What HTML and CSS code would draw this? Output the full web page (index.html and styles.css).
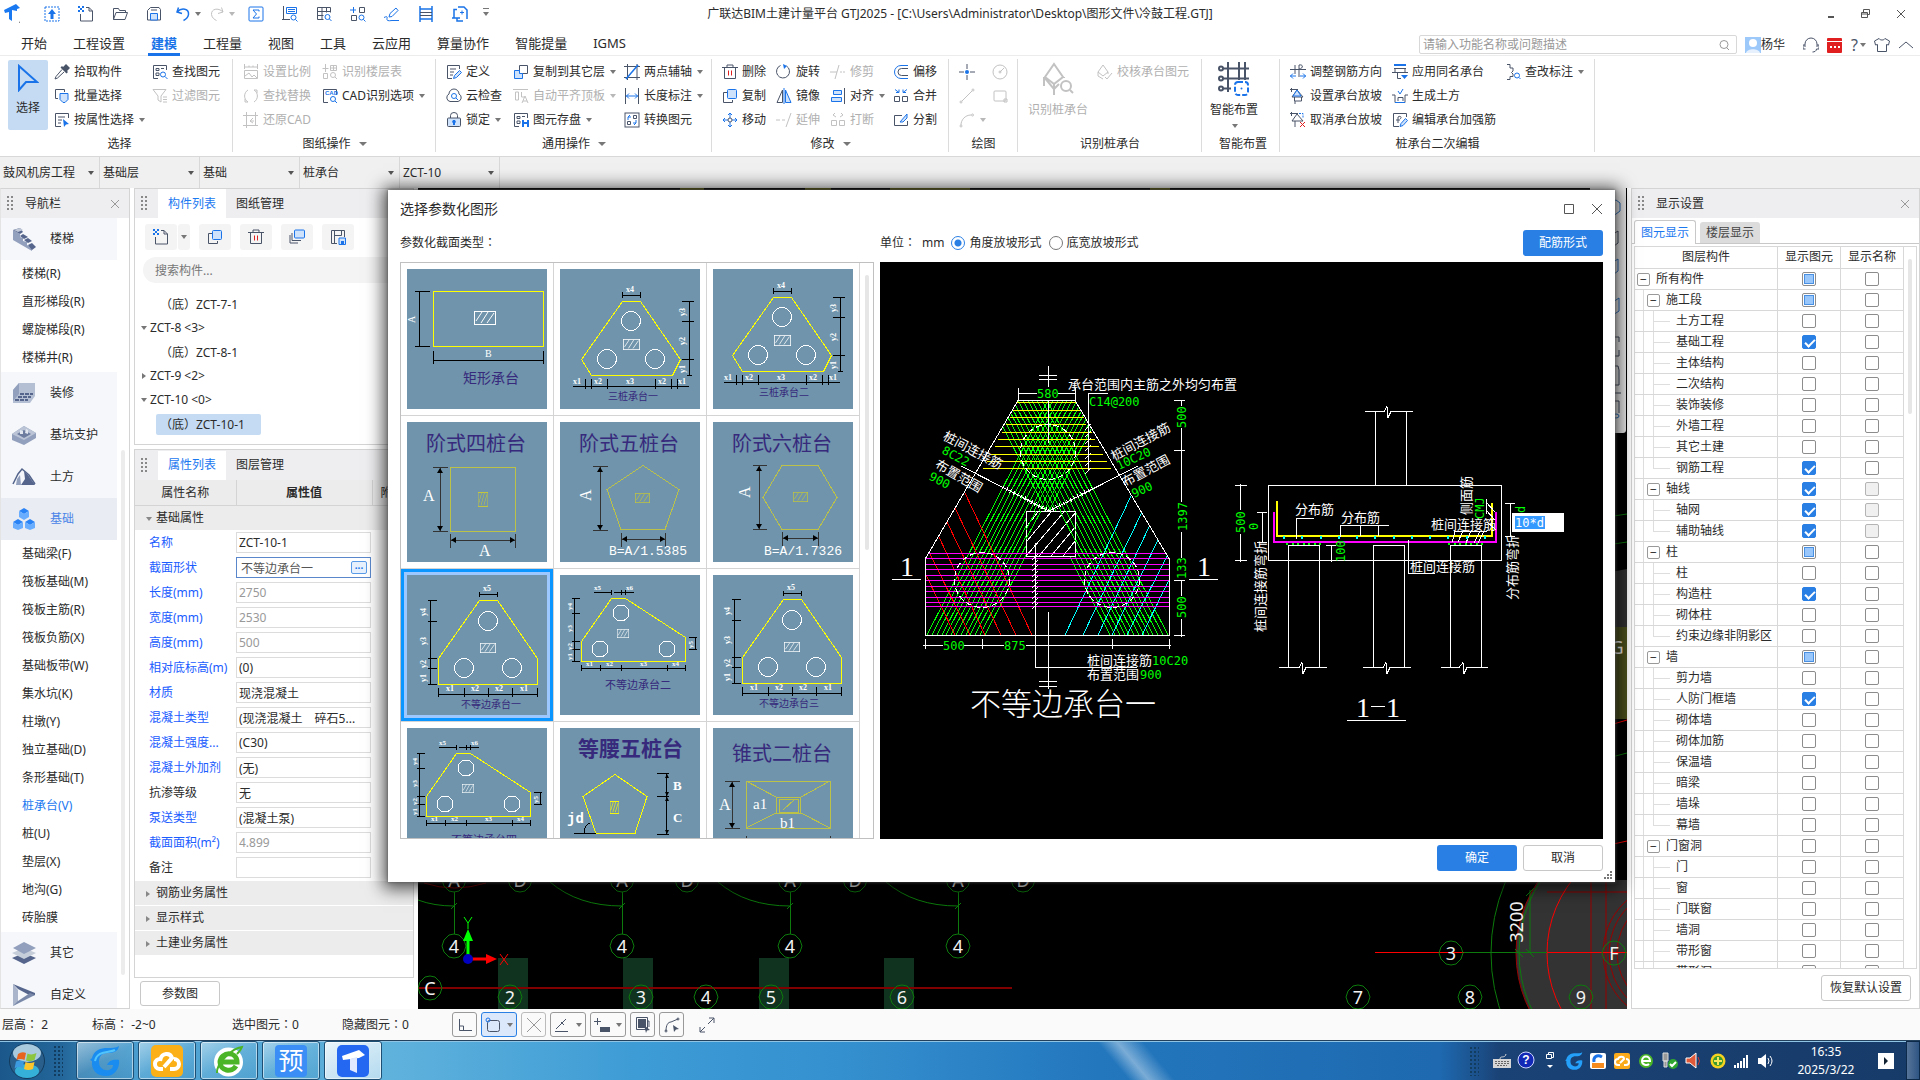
FILE: index.html
```html
<!DOCTYPE html>
<html lang="zh-CN">
<head>
<meta charset="utf-8">
<title>广联达BIM土建计量平台 GTJ2025</title>
<link rel="stylesheet" href="styles.css">
</head>
<body>
<svg class="defs" aria-hidden="true">
  <symbol id="dots" viewBox="0 0 6 15"><path fill="#888" d="M0 0h2v2H0zM4 0h2v2H4zM0 4h2v2H0zM4 4h2v2H4zM0 8h2v2H0zM4 8h2v2H4zM0 12h2v2H0zM4 12h2v2H4z"/></symbol>
  <symbol id="close" viewBox="0 0 10 10"><path class="s" d="M1 1l8 8M9 1L1 9"/></symbol>
  <symbol id="logo" viewBox="0 0 16 20"><path fill="#1a78f0" d="M0 6L12 0l4 4-3 1v2L8 6v11l-3-2V8L1 9z"/><path fill="#666" d="M15 19l1-2v2z"/></symbol>
  <symbol id="cloudup" viewBox="0 0 16 16"><rect class="b" x="1" y="1" width="14" height="14" stroke-dasharray="2 1"/><path class="f" d="M8 3l4 5H9.500v5h-3V8H4z"/></symbol>
  <symbol id="new" viewBox="0 0 16 16"><path class="k" d="M8 1.500h3l3.500 3.500v10h-12V8M11 1.500V5h3.500"/><path class="f" d="M0 0h2v2H0zM4 0h2v2H4zM2 2h2v2H2zM0 4h2v2H0zM4 4h2v2H4z"/></symbol>
  <symbol id="open" viewBox="0 0 16 16"><path class="k" d="M1.500 13.500v-11h5l1 2h6v2M1.500 13.500L4 6.500h11.500l-2.500 7z"/></symbol>
  <symbol id="save" viewBox="0 0 16 16"><path class="k" d="M1.500 4.500l3-3h8.500l1.500 2v10.500h-13z"/><path class="k" d="M5 4h6"/><path class="b l" d="M4.500 7.500h7v6.500h-7z"/></symbol>
  <symbol id="undo" viewBox="0 0 16 16"><path class="b" stroke-width="1.500" d="M3.500 1.500L2 6l5 1.500M2 6c5-5 12-3 11.500 2.500-.5 3.500-3 5-5 6"/></symbol>
  <symbol id="redo" viewBox="0 0 16 16"><path class="k" d="M12.500 1.500L14 6 9 7.500M14 6C9 1 2 3 2.500 8.500c.5 3.500 3 5 5 6"/></symbol>
  <symbol id="sigma" viewBox="0 0 16 16"><rect class="b" x="1" y="1" width="14" height="14" rx="1"/><path class="b" d="M11 5.500V4H5l3.500 4L5 12h6v-1.500"/></symbol>
  <symbol id="lookup" viewBox="0 0 16 16"><path class="k" d="M1.500 0v13.500M0 13.500h8"/><path class="b" d="M4.500 1.500h10v6h-10zM6 3.500h7M6 5.500h7"/><circle class="b" cx="11.500" cy="11.500" r="2.500"/><path class="b" d="M13.500 13.500l2 2"/></symbol>
  <symbol id="tablesearch" viewBox="0 0 16 16"><path class="k" d="M1.500 1.500h13v5M1.500 1.500v12h6M6 1.500v12M10.500 1.500v5M1.500 5.500h13M1.500 9.500h6"/><circle class="b" cx="11.500" cy="11" r="2.500"/><path class="b" d="M13.500 13l2 2"/></symbol>
  <symbol id="partsearch" viewBox="0 0 16 16"><path class="b" d="M0 4h6M3.500 1v6"/><path class="k" d="M9.500 1.500h5v5h-5zM1.500 9.500h5v5h-5z"/><circle class="b" cx="11.500" cy="11.500" r="2.500"/><path class="b" d="M13.500 13.500l2 2"/></symbol>
  <symbol id="floortable" viewBox="0 0 16 16"><path class="k" d="M3.500 0v8M.5 4.500h6M1.500 9.500h4v5h-4zM8.500 1.500h6v5h-6zM11.500 1.500v5M8.500 4h6"/><circle class="k" cx="11" cy="11" r="2.500"/><path class="k" d="M13 13l2 2"/></symbol>
  <symbol id="pen" viewBox="0 0 16 16"><path class="b" d="M5 11l1-3.500 6-5.500 2 2.500L8 10.500zM0 11.500q4-2 3 1t5 2h7"/></symbol>
  <symbol id="beam" viewBox="0 0 16 16"><path class="b" stroke-width="1.500" d="M2 0v16M14 0v16M2 3h12M2 13h12"/><path class="k" d="M2 6.500h12M2 9.500h12"/></symbol>
  <symbol id="crop" viewBox="0 0 16 16"><path class="b" stroke-width="1.500" d="M5 3.500H2v8M0 12h8M6 1h6l3 3v9M11 15H5v-3"/><path class="b" d="M8 6.500h4M10 4.500v4"/></symbol>
  <symbol id="picker" viewBox="0 0 16 16"><path class="kf" d="M9 3l3-3 4 4-3 3 1 1-1.500 1.500-6-6L8 2z"/><path class="k" d="M8 5.500l-6 7L1 15l2.500-1 6.500-6"/></symbol>
  <symbol id="multi" viewBox="0 0 16 16"><path class="k" d="M4 10.500H1.500v-9h9V4"/><path class="b l" d="M6 5.500h8v6l-3 3H9l-3-3z"/></symbol>
  <symbol id="attr" viewBox="0 0 16 16"><path class="k" d="M7 14.500H1.500v-13h13V6M4 5h7M4 8h4M4 11h3"/><path class="f" d="M9 7l6 5-3 .5-2 2.500z"/></symbol>
  <symbol id="find" viewBox="0 0 16 16"><path class="k" d="M6 14.500H1.500v-13h13V6M4 4.500h3v2H4zM4 9h3v2.500H4zM9 4.500h3"/><circle class="b" cx="11" cy="10.500" r="2.500"/><path class="b" d="M13 12.500l2.500 2.500"/></symbol>
  <symbol id="filter" viewBox="0 0 16 16"><path class="k" d="M1 1.500h13L9 8v6l-3-2V8zM11 9h4M11 11.500h4M11 14h4"/></symbol>
  <symbol id="ratio" viewBox="0 0 16 16"><path class="k" d="M1 3h14M1.500 0v5M14.500 0v5M6 1.500V3M10 1.500V3M1.500 6.500h13v8h-13zM2 12l4-3 3 4 2-2 3 3"/></symbol>
  <symbol id="swap" viewBox="0 0 16 16"><path class="k" d="M5 2a7 7 0 0 0 0 12M11 14a7 7 0 0 0 0-12M5 14l-3 0M11 2h3v3M2 11v3"/></symbol>
  <symbol id="restorecad" viewBox="0 0 16 16"><path class="k" d="M3.500 0v16M0 3.500h15M12.500 0v14M0 13.500h15M10 6L7 9l3 2M7 9h4"/></symbol>
  <symbol id="define" viewBox="0 0 16 16"><path class="k" d="M6 14.500H1.500v-13h12V5M4 5h6M4 8h4M4 11h3"/><path class="b l" d="M7.500 14.500l1-3 5-5 2 2-5 5z"/></symbol>
  <symbol id="cloudcheck" viewBox="0 0 16 16"><path class="k" d="M4 13.500a4 4 0 0 1-1-7.500 5 5 0 0 1 10 0 4 4 0 0 1-1 7.500z"/><circle class="b" cx="8" cy="8" r="2.500"/><path class="b" d="M10 10l2 2"/></symbol>
  <symbol id="lock" viewBox="0 0 16 16"><path class="k" d="M4.500 6V3.500a3.500 3 0 0 1 7 0V6"/><rect class="k l" x="1.500" y="6" width="13" height="8.500" rx="1"/><path class="f" d="M7 8h2l1 2-1 1v2H7v-2l-1-1z"/></symbol>
  <symbol id="copyfloor" viewBox="0 0 16 16"><path class="k" d="M6.500 9.500v-8h8v8z"/><path class="b l" d="M6.500 6.500h-5v8h8v-5h-3z"/></symbol>
  <symbol id="align" viewBox="0 0 16 16"><path class="k" d="M0 1.500h15M2.500 4v8h3V4zM8.500 4v5h3M9 15l3-7 3 7M10 13h4"/></symbol>
  <symbol id="store" viewBox="0 0 16 16"><path class="k" d="M6 14.500H1.500v-13h13V6M4 4.500h3v2H4zM4 9h3v2.500H4zM9 4.500h3"/><path class="f" d="M9 8h7v7H9z"/><path fill="#fff" d="M11 8h3v2h-3zM11 12h3v3h-3z"/></symbol>
  <symbol id="twopoint" viewBox="0 0 16 16"><path class="k" d="M3.500 0v16M0 2.500h16M13 0v16M0 13.500h16"/><path class="b" stroke-width="1.500" d="M2 15L14 1"/></symbol>
  <symbol id="dim" viewBox="0 0 16 16"><path class="k" d="M1.500 0v16M14.500 0v16"/><path class="b" d="M2 8h12M5 5.500L2.500 8 5 10.500M11 5.500L13.500 8 11 10.500"/></symbol>
  <symbol id="convert" viewBox="0 0 16 16"><rect class="k" x="1" y="1" width="14" height="14"/><path class="b" d="M6 3L4 5h3M4 5v3M10 13l2-2H9M12 11V8"/><path class="k" d="M9.500 3.500h3v3h-3zM3.500 9.500h3v3h-3z"/></symbol>
  <symbol id="trash" viewBox="0 0 16 16"><path class="k" d="M0 3.500h16M5 3V1h6v2M2.500 4v10.500h11V4"/><path stroke="#e02020" d="M6.500 6.500v5M9.500 6.500v5"/></symbol>
  <symbol id="copy" viewBox="0 0 16 16"><path class="k" d="M5 4.500H1.500v10h9V12"/><rect class="b l" x="5.500" y="1.500" width="9" height="9" rx="1"/></symbol>
  <symbol id="move" viewBox="0 0 16 16"><path class="b" d="M8 1v5M8 10v5M1 8h5M10 8h5M6 3l2-2 2 2M6 13l2 2 2-2M3 6L1 8l2 2M13 6l2 2-2 2"/><circle class="k" cx="8" cy="8" r="2"/></symbol>
  <symbol id="rotate" viewBox="0 0 16 16"><path class="k" d="M10.500 2a6.500 6.500 0 1 1-6-.5"/><path class="f" d="M7 0l4 2-3 3z"/></symbol>
  <symbol id="mirror" viewBox="0 0 16 16"><path class="k" d="M6.500 2v12.500H1z"/><path class="b l" d="M9.500 2v12.500H15zM8 0v16"/></symbol>
  <symbol id="extend" viewBox="0 0 16 16"><path class="k" d="M0 8h4M6 8h3M15 1l-5 14"/></symbol>
  <symbol id="trim" viewBox="0 0 16 16"><path class="k" d="M0 8h7M10 8h2M13 8h2M9 1L5 15"/></symbol>
  <symbol id="aligning" viewBox="0 0 16 16"><path class="k" d="M14.500 0v16"/><path class="b l" d="M3.500 2.500h8v4h-8zM1.500 9.500h10v4h-10z"/></symbol>
  <symbol id="break" viewBox="0 0 16 16"><path class="k" d="M1.500 8.500h5v5h-5zM9.500 8.500h5v5h-5zM6 5L3 3l2-2M10 5l3-2-2-2"/></symbol>
  <symbol id="offset" viewBox="0 0 16 16"><path class="b" d="M15 1.500H8a6.500 6.500 0 0 0 0 13h7"/><path class="k" d="M15 4.500H8.500a3.500 3.500 0 0 0 0 7H15"/></symbol>
  <symbol id="merge" viewBox="0 0 16 16"><path class="k" d="M1.500 8.500h5v5h-5zM9.500 8.500h5v5h-5z"/><path class="b" d="M2 1.500l4 3M6 1.500v3H3M14 1.500l-4 3M10 1.500v3h3"/></symbol>
  <symbol id="split" viewBox="0 0 16 16"><path class="k" d="M9 3.500H1.500v10h13V9"/><path class="b l" d="M7 10l7-8v4l-4 4z"/></symbol>
  <symbol id="point" viewBox="0 0 16 16"><path class="k" d="M8 0v5M8 11v5M0 8h5M11 8h5"/><circle class="f" cx="8" cy="8" r="2"/></symbol>
  <symbol id="line" viewBox="0 0 16 16"><path class="k" d="M3 13L13 3"/><circle class="k" cx="2" cy="14" r="1"/><circle class="k" cx="14" cy="2" r="1"/></symbol>
  <symbol id="arc" viewBox="0 0 16 16"><path class="k" d="M2 13C2 8 6 3 12 3"/><circle class="k" cx="2" cy="14" r="1"/><circle class="k" cx="13.500" cy="3" r="1"/></symbol>
  <symbol id="circle" viewBox="0 0 16 16"><circle class="k" cx="8" cy="8" r="7"/><path class="k" d="M8 8l4-4"/><circle class="k" cx="8" cy="8" r="1"/></symbol>
  <symbol id="rect" viewBox="0 0 16 16"><rect class="k" x="2" y="3" width="12" height="10" rx="1"/><path class="k" d="M12 11h3v3h-3z"/></symbol>
  <symbol id="pilecap" viewBox="0 0 32 34"><path class="k" stroke-width="2" d="M12 2l9 13-9 7-9-7zM2 15v9M2 15l10 12v6M22 16v-1M12 22v5l5-5"/><circle class="k" stroke-width="2" cx="24" cy="24" r="5"/><path class="k" stroke-width="2" d="M28 28l3 3"/></symbol>
  <symbol id="capcheck" viewBox="0 0 16 16"><path class="k" d="M6 1l5 7-5 4-5-4zM1 8v4l5 3M11 8v2M8 13l2 2 5-6"/></symbol>
  <symbol id="smart" viewBox="0 0 34 34"><path class="k" stroke-width="2" d="M6 6.500h26M6 16.500h26M6 26.500h8M11 0v30M22 0v18M28 0v18"/><g class="k" stroke-width="2"><circle cx="4" cy="6.500" r="2"/><circle cx="4" cy="16.500" r="2"/><circle cx="4" cy="26.500" r="2"/></g><rect class="b" x="18" y="20" width="13" height="13" rx="3" stroke-width="2" stroke-dasharray="5 2"/><circle class="f" cx="24.500" cy="26.500" r="1"/></symbol>
  <symbol id="cursor" viewBox="0 0 22 28"><path class="b" stroke-width="2" d="M2 2v24l7-8h11z"/></symbol>
  <symbol id="rebardir" viewBox="0 0 16 16"><path class="k" d="M0 5.500h16M5 1v9M9 13V1c5-1 4 4 0 4"/><path class="b" d="M0 12h6M10 12h6M3 9.500L.5 12 3 14.500M13 9.500l2.500 2.500-2.500 2.500"/></symbol>
  <symbol id="slope" viewBox="0 0 16 16"><path class="k" d="M1.500 0v4M0 1.500h8M2 9l5-7 6 7zM4.500 9v4h7V9M5 13v3"/><path class="b l" d="M3 8l4-6 4 6z"/></symbol>
  <symbol id="unslope" viewBox="0 0 16 16"><path class="k" d="M1.500 0v4M0 1.500h8M2 9l5-7 6 7zM5 9v6"/><path class="b" stroke-dasharray="2 1" d="M9 1.500h4V6"/><path stroke="#e02020" d="M10 10l5 5M15 10l-5 5"/></symbol>
  <symbol id="samename" viewBox="0 0 16 16"><path class="b" stroke-width="2" d="M2 1h12"/><path class="k" d="M2 4.500h12M0 8.500h16M3 4v4M13 4v4M5.500 9v5.500H9"/><path class="f" d="M9 11h7l-3.500 4z"/></symbol>
  <symbol id="earth" viewBox="0 0 16 16"><path class="b" d="M6 3l2 3 3-5"/><path class="k" d="M0 7h3v7.500h10V7h3M6 13V9.500h5V13"/><path class="b" d="M3 14.500h10"/></symbol>
  <symbol id="strengthen" viewBox="0 0 16 16"><path class="k" d="M7 14.500H1.500v-13h13V5M4 8h4M6 11V5c3-2 4 1 2 2"/><path class="b l" d="M8 14.500l1-3 4.500-5 2 2-4.500 5z"/></symbol>
  <symbol id="tagcheck" viewBox="0 0 16 16"><path class="k" d="M2 .5h3v3.500h3v3L6.500 8.500 8 10v2.500H5v3H2"/><circle class="b" cx="12" cy="11.500" r="2.500"/><path class="b" d="M14 13.500l1.500 1.500"/></symbol>
  <symbol id="search" viewBox="0 0 12 12"><circle class="s" cx="6" cy="5.500" r="4"/><path class="s" d="M8.500 8.500L11 11"/></symbol>
  <symbol id="saveitem" viewBox="0 0 16 16"><path class="k" d="M7 14.500H1.500v-13h13V8M4.500 14V1.500M4.500 6.500h7M11.500 1.500v5"/><path class="b l" d="M9 9h6.500v6.500H9z"/><path class="f" d="M11 12h3v3h-3z"/></symbol>
  <symbol id="copyfar" viewBox="0 0 16 16"><path class="k" d="M3 4v7.500h9M1 6v8h8"/><rect class="b l" x="5.500" y="1" width="10" height="8" rx="1"/></symbol>
  <symbol id="stairs" viewBox="0 0 24 24"><path fill="#93a0bd" d="M1 3l7 4v3l3 1v3l4 1v3l5 2v4L1 13z"/><path fill="#55658c" d="M1 3l7-2 3 4-3 2zM8 9l3-2 5 3-4 2zM12 13l4-2 4 3-4 2zM16 18l4-2 4 4-4 3z"/><path fill="#c0c8d8" d="M2 3l6-2 3 2-5 2z"/></symbol>
  <symbol id="decor" viewBox="0 0 24 24"><path fill="#b5bfd3" d="M7 2h16v13l-5 7H1V9z"/><path fill="#93a0bd" d="M1 9l6-7v11l-6 7z"/><path stroke="#55658c" stroke-width="2" stroke-dasharray="4 1" d="M8 13h13M6 16h13M3 19h13"/></symbol>
  <symbol id="pit" viewBox="0 0 24 24"><path fill="#93a0bd" d="M0 11l12-8 12 7v5l-12 7L0 17z"/><path fill="#bac4d6" d="M0 11l12-8 12 7-12 7z"/><path fill="#6d7c9f" d="M5 11l7-4 7 4-7 4z"/><path fill="#e3e7ef" d="M8 7l3 1v3H8zM14 6l2 1v4l-3-1z"/></symbol>
  <symbol id="earthwork" viewBox="0 0 24 24"><path fill="none" stroke="#55658c" stroke-width="1.500" d="M1 19L6 9l4-5 7 6 6 9"/><path fill="#55658c" d="M12 6l4 4 7 10H9l4-6z"/><path fill="#93a0bd" d="M5 14l3-4 1 10H4z"/></symbol>
  <symbol id="foundation" viewBox="0 0 24 24"><path fill="#2a83f5" d="M12 1l5 3-5 3-5-3zM6 12l5 3-5 3-5-3zM18 12l5 3-5 3-5-3z"/><path fill="#69adff" d="M7 4l5 3 5-3v6l-5 3-5-3zM1 15l5 3 5-3v6l-5 2-5-2zM13 15l5 3 5-3v6l-5 2-5-2z"/></symbol>
  <symbol id="others" viewBox="0 0 24 24"><path fill="#55658c" d="M0 17l12-5 12 5-12 6z"/><path fill="#c6ceda" d="M0 12l12-5 12 5-12 6z"/><path fill="#93a0bd" d="M1 7l11-6 12 6-12 6z"/></symbol>
  <symbol id="custom" viewBox="0 0 24 24"><path fill="#aab4ca" d="M1 1v22l5-3V7z"/><path fill="#55658c" d="M1 1l22 9v2l-4 1L6 6z"/><path fill="#7988a8" d="M1 23l22-11-5-2L6 18z"/></symbol>
  <symbol id="oct" viewBox="-13 -13 26 26"><path fill="none" stroke="#0c7a0c" d="M-5-11L0-12l5 1 5 5 2 6-2 6-5 5-5 1-5-1-5-5-2-6 2-6z"/></symbol>
  <symbol id="blk" viewBox="0 0 22 14" preserveAspectRatio="none"><rect x=".5" y=".5" width="21" height="13" fill="none" stroke="currentColor"/><path fill="none" stroke="currentColor" d="M2 10l6-9M7 12l7-11M13 12l7-10"/></symbol>
</svg>

<header class="titlebar">
  <div class="quick">
    <span class="brand"><svg class="i"><use href="#logo"/></svg></span>
    <button aria-label="上传"><svg class="i"><use href="#cloudup"/></svg></button>
    <button aria-label="新建"><svg class="i"><use href="#new"/></svg></button>
    <button aria-label="打开"><svg class="i"><use href="#open"/></svg></button>
    <button aria-label="保存"><svg class="i"><use href="#save"/></svg></button>
    <button aria-label="撤销"><svg class="i"><use href="#undo"/></svg><i class="tri"></i></button>
    <button class="off" aria-label="恢复"><svg class="i"><use href="#redo"/></svg><i class="tri"></i></button>
    <button aria-label="汇总"><svg class="i"><use href="#sigma"/></svg></button>
    <button aria-label="查看工程量"><svg class="i"><use href="#lookup"/></svg></button>
    <button aria-label="查看报表"><svg class="i"><use href="#tablesearch"/></svg></button>
    <button aria-label="查看构件"><svg class="i"><use href="#partsearch"/></svg></button>
    <button aria-label="编辑"><svg class="i"><use href="#pen"/></svg></button>
    <button aria-label="梁"><svg class="i"><use href="#beam"/></svg></button>
    <button aria-label="裁剪"><svg class="i"><use href="#crop"/></svg></button>
    <button class="slim" aria-label="更多"><i class="tri bar"></i></button>
  </div>
  <h1>广联达BIM土建计量平台 GTJ2025 - [C:\Users\Administrator\Desktop\图形文件\冷鼓工程.GTJ]</h1>
  <div class="winctl">
    <button aria-label="最小化"><svg width="12" height="12"><path class="s" stroke-width="2" d="M3 9h6"/></svg></button>
    <button aria-label="还原"><svg width="12" height="12"><path class="s" d="M3.500 4V1.500h6v5H8M1.500 4.500h6v5h-6zM1.500 6h6"/></svg></button>
    <button aria-label="关闭"><svg width="10" height="10"><use href="#close"/></svg></button>
  </div>
</header>

<nav class="tabs">
  <button>开始</button><button>工程设置</button><button class="on">建模</button><button>工程量</button><button>视图</button><button>工具</button><button>云应用</button><button>算量协作</button><button>智能提量</button><button>IGMS</button>
  <div class="account">
    <label class="ask"><input type="text" placeholder="请输入功能名称或问题描述" aria-label="搜索功能"><svg width="12" height="12"><use href="#search"/></svg></label>
    <button class="user"><svg width="16" height="16"><path fill="#9cc8fa" d="M0 0h16v16H0z"/><circle cx="8" cy="6" r="4" fill="#fff"/><path fill="#e6f1fd" d="M1 16c1-5 13-5 14 0z"/></svg>杨华</button>
    <button aria-label="客服"><svg class="i"><path class="k" d="M2 10V7a6 6 0 0 1 12 0v3M2 8H0v4h2.500M14 8h2v4h-2.500c0 2-2 3-4 3"/></svg></button>
    <button aria-label="消息"><svg class="i"><rect y="1" width="15" height="15" rx="1" fill="#e02020"/><path stroke="#fff" d="M0 4.500h16"/><path stroke="#fff" stroke-width="2" d="M3 10h2M7 10h2M11 10h2"/></svg></button>
    <button class="help">?<i class="tri"></i></button>
    <button aria-label="皮肤"><svg class="i"><path class="k" d="M5 1.500L.500 4l1 4 2-.5v7h9v-7l2 .5 1-4L11 1.500c-1 2-5 2-6 0z"/></svg></button>
    <button aria-label="收起"><svg class="i"><path class="k" d="M1 11l7-6 7 6"/></svg></button>
  </div>
</nav>

<section class="ribbon">
  <div class="group g1">
    <div class="tools">
      <button class="big picked"><svg width="22" height="28"><use href="#cursor"/></svg>选择</button>
      <button><svg class="i"><use href="#picker"/></svg>拾取构件</button>
      <button><svg class="i"><use href="#multi"/></svg>批量选择</button>
      <button><svg class="i"><use href="#attr"/></svg>按属性选择<i class="tri"></i></button>
      <button><svg class="i"><use href="#find"/></svg>查找图元</button>
      <button class="off"><svg class="i"><use href="#filter"/></svg>过滤图元</button>
    </div>
    <footer>选择</footer>
  </div>
  <div class="group g2">
    <div class="tools">
      <button class="off"><svg class="i"><use href="#ratio"/></svg>设置比例</button>
      <button class="off"><svg class="i"><use href="#swap"/></svg>查找替换</button>
      <button class="off"><svg class="i"><use href="#restorecad"/></svg>还原CAD</button>
      <button class="off"><svg class="i"><use href="#floortable"/></svg>识别楼层表</button>
      <button><svg class="i"><path class="k" d="M6 14.500H1.500v-13h13V7"/><text class="tinyt" x="3" y="7">CAD</text><circle class="b" cx="11" cy="11" r="2.500"/><path class="b" d="M13 13l2 2"/></svg>CAD识别选项<i class="tri"></i></button>
    </div>
    <footer>图纸操作<i class="tri wide"></i></footer>
  </div>
  <div class="group g3">
    <div class="tools">
      <button><svg class="i"><use href="#define"/></svg>定义</button>
      <button><svg class="i"><use href="#cloudcheck"/></svg>云检查</button>
      <button><svg class="i"><use href="#lock"/></svg>锁定<i class="tri"></i></button>
      <button><svg class="i"><use href="#copyfloor"/></svg>复制到其它层<i class="tri"></i></button>
      <button class="off"><svg class="i"><use href="#align"/></svg>自动平齐顶板<i class="tri"></i></button>
      <button><svg class="i"><use href="#store"/></svg>图元存盘<i class="tri"></i></button>
      <button><svg class="i"><use href="#twopoint"/></svg>两点辅轴<i class="tri"></i></button>
      <button><svg class="i"><use href="#dim"/></svg>长度标注<i class="tri"></i></button>
      <button><svg class="i"><use href="#convert"/></svg>转换图元</button>
    </div>
    <footer>通用操作<i class="tri wide"></i></footer>
  </div>
  <div class="group g4">
    <div class="tools">
      <button><svg class="i"><use href="#trash"/></svg>删除</button>
      <button><svg class="i"><use href="#copy"/></svg>复制</button>
      <button><svg class="i"><use href="#move"/></svg>移动</button>
      <button><svg class="i"><use href="#rotate"/></svg>旋转</button>
      <button><svg class="i"><use href="#mirror"/></svg>镜像</button>
      <button class="off"><svg class="i"><use href="#extend"/></svg>延伸</button>
      <button class="off"><svg class="i"><use href="#trim"/></svg>修剪</button>
      <button><svg class="i"><use href="#aligning"/></svg>对齐<i class="tri"></i></button>
      <button class="off"><svg class="i"><use href="#break"/></svg>打断</button>
      <button><svg class="i"><use href="#offset"/></svg>偏移</button>
      <button><svg class="i"><use href="#merge"/></svg>合并</button>
      <button><svg class="i"><use href="#split"/></svg>分割</button>
    </div>
    <footer>修改<i class="tri wide"></i></footer>
  </div>
  <div class="group g5">
    <div class="tools">
      <button aria-label="点"><svg class="i"><use href="#point"/></svg></button>
      <button class="off" aria-label="直线"><svg class="i"><use href="#line"/></svg></button>
      <button class="off" aria-label="弧线"><svg class="i"><use href="#arc"/></svg><i class="tri"></i></button>
      <button class="off" aria-label="圆"><svg class="i"><use href="#circle"/></svg></button>
      <button class="off" aria-label="矩形"><svg class="i"><use href="#rect"/></svg></button>
    </div>
    <footer>绘图</footer>
  </div>
  <div class="group g6">
    <div class="tools">
      <button class="big off"><svg width="32" height="34"><use href="#pilecap"/></svg>识别桩承台</button>
      <button class="off"><svg class="i"><use href="#capcheck"/></svg>校核承台图元</button>
    </div>
    <footer>识别桩承台</footer>
  </div>
  <div class="group g7">
    <div class="tools">
      <button class="big"><svg width="34" height="34"><use href="#smart"/></svg>智能布置<i class="tri"></i></button>
    </div>
    <footer>智能布置</footer>
  </div>
  <div class="group g8">
    <div class="tools">
      <button><svg class="i"><use href="#rebardir"/></svg>调整钢筋方向</button>
      <button><svg class="i"><use href="#slope"/></svg>设置承台放坡</button>
      <button><svg class="i"><use href="#unslope"/></svg>取消承台放坡</button>
      <button><svg class="i"><use href="#samename"/></svg>应用同名承台</button>
      <button><svg class="i"><use href="#earth"/></svg>生成土方</button>
      <button><svg class="i"><use href="#strengthen"/></svg>编辑承台加强筋</button>
      <button><svg class="i"><use href="#tagcheck"/></svg>查改标注<i class="tri"></i></button>
    </div>
    <footer>桩承台二次编辑</footer>
  </div>
</section>

<section class="combos">
  <label><select aria-label="工程"><option>鼓风机房工程</option></select><i class="tri"></i></label>
  <label><select aria-label="楼层"><option>基础层</option></select><i class="tri"></i></label>
  <label><select aria-label="分类"><option>基础</option></select><i class="tri"></i></label>
  <label><select aria-label="构件类型"><option>桩承台</option></select><i class="tri"></i></label>
  <label><select aria-label="构件"><option>ZCT-10</option></select><i class="tri"></i></label>
</section>

<main class="work">
  <aside class="navbar">
    <div class="phead"><svg class="grip"><use href="#dots"/></svg><span>导航栏</span><button class="x" aria-label="关闭导航栏"><svg width="10" height="10"><use href="#close"/></svg></button></div>
    <div class="navbody">
      <div class="navlist">
        <button class="cat"><svg><use href="#stairs"/></svg>楼梯</button>
        <a href="#">楼梯(R)</a><a href="#">直形梯段(R)</a><a href="#">螺旋梯段(R)</a><a href="#">楼梯井(R)</a>
        <button class="cat"><svg><use href="#decor"/></svg>装修</button>
        <button class="cat"><svg><use href="#pit"/></svg>基坑支护</button>
        <button class="cat"><svg><use href="#earthwork"/></svg>土方</button>
        <button class="cat on"><svg><use href="#foundation"/></svg>基础</button>
        <a href="#">基础梁(F)</a><a href="#">筏板基础(M)</a><a href="#">筏板主筋(R)</a><a href="#">筏板负筋(X)</a><a href="#">基础板带(W)</a><a href="#">集水坑(K)</a><a href="#">柱墩(Y)</a><a href="#">独立基础(D)</a><a href="#">条形基础(T)</a><a href="#" class="on">桩承台(V)</a><a href="#">桩(U)</a><a href="#">垫层(X)</a><a href="#">地沟(G)</a><a href="#">砖胎膜</a>
        <button class="cat"><svg><use href="#others"/></svg>其它</button>
        <button class="cat"><svg><use href="#custom"/></svg>自定义</button>
      </div>
      <div class="rail"><i></i></div>
    </div>
  </aside>

  <div class="side">
    <section class="panel list">
      <div class="phead"><svg class="grip"><use href="#dots"/></svg><button class="ptab on">构件列表</button><button class="ptab">图纸管理</button></div>
      <div class="ltools">
        <span class="duo"><button aria-label="新建构件"><svg class="i"><use href="#new"/></svg></button><button class="dd" aria-label="新建选项"><i class="tri"></i></button></span>
        <button aria-label="复制构件"><svg class="i"><use href="#copy"/></svg></button>
        <button aria-label="删除构件"><svg class="i"><use href="#trash"/></svg></button>
        <button aria-label="层间复制"><svg class="i"><use href="#copyfar"/></svg></button>
        <button aria-label="存档"><svg class="i"><use href="#saveitem"/></svg></button>
      </div>
      <input class="find" type="text" placeholder="搜索构件..." aria-label="搜索构件">
      <ul class="tree">
        <li class="leaf"><span><b lang="zh-TW">（</b>底<b lang="zh-TW">）</b>ZCT-7-1</span></li>
        <li class="open">ZCT-8 &lt;3&gt;</li>
        <li class="leaf"><span><b lang="zh-TW">（</b>底<b lang="zh-TW">）</b>ZCT-8-1</span></li>
        <li class="shut">ZCT-9 &lt;2&gt;</li>
        <li class="open">ZCT-10 &lt;0&gt;</li>
        <li class="leaf"><span class="sel"><b lang="zh-TW">（</b>底<b lang="zh-TW">）</b>ZCT-10-1</span></li>
      </ul>
    </section>
    <section class="panel props">
      <div class="phead"><svg class="grip"><use href="#dots"/></svg><button class="ptab on">属性列表</button><button class="ptab">图层管理</button></div>
      <table>
        <thead><tr><th class="c1">属性名称</th><th class="c2">属性值</th><th>附加</th></tr></thead>
        <tbody>
          <tr class="sec open"><td colspan="3">基础属性</td></tr>
          <tr><td><label for="p1">名称</label></td><td><input id="p1" value="ZCT-10-1"></td><td></td></tr>
          <tr class="act"><td><label for="p2">截面形状</label></td><td><div class="pick"><input id="p2" value="不等边承台一"><button aria-label="选择截面">···</button></div></td><td></td></tr>
          <tr class="ro"><td><label for="p3">长度(mm)</label></td><td><input id="p3" value="2750" readonly></td><td></td></tr>
          <tr class="ro"><td><label for="p4">宽度(mm)</label></td><td><input id="p4" value="2530" readonly></td><td></td></tr>
          <tr class="ro"><td><label for="p5">高度(mm)</label></td><td><input id="p5" value="500" readonly></td><td></td></tr>
          <tr><td><label for="p6">相对底标高(m)</label></td><td><input id="p6" value="(0)"></td><td></td></tr>
          <tr><td><label for="p7">材质</label></td><td><input id="p7" value="现浇混凝土"></td><td></td></tr>
          <tr><td><label for="p8">混凝土类型</label></td><td><input id="p8" value="(现浇混凝土　碎石5..."></td><td></td></tr>
          <tr><td><label for="p9">混凝土强度...</label></td><td><input id="p9" value="(C30)"></td><td></td></tr>
          <tr><td><label for="p10">混凝土外加剂</label></td><td><input id="p10" value="(无)"></td><td></td></tr>
          <tr class="plain"><td><label for="p11">抗渗等级</label></td><td><input id="p11" value="无"></td><td></td></tr>
          <tr><td><label for="p12">泵送类型</label></td><td><input id="p12" value="(混凝土泵)"></td><td></td></tr>
          <tr class="ro"><td><label for="p13">截面面积(m²)</label></td><td><input id="p13" value="4.899" readonly></td><td></td></tr>
          <tr class="plain"><td><label for="p14">备注</label></td><td><input id="p14" value=""></td><td></td></tr>
          <tr class="sec"><td colspan="3">钢筋业务属性</td></tr>
          <tr class="sec"><td colspan="3">显示样式</td></tr>
          <tr class="sec"><td colspan="3">土建业务属性</td></tr>
        </tbody>
      </table>
    </section>
    <div class="under"><button class="plainbtn">参数图</button></div>
  </div>

  <div class="canvas">
    <svg viewBox="418 188 1209 821" preserveAspectRatio="xMinYMin slice">
      <rect x="418" y="188" width="1209" height="821" fill="#000"/>
      <path fill="#5a5a12" d="M680 188h24v2h-24zM805 188h26v2h-26zM890 188h80v2h-80zM1150 188h20v2h-20z"/>
      <rect x="1590" y="186" width="36" height="247" rx="3" fill="#efefef"/>
      <g fill="none" stroke="#3f4a5f"><path stroke="#2a6fc0" d="M1610 203l6-3 4 3v8l-8 6"/><path d="M1610 236l8-5v12l-8 6z"/><path stroke="#2a6fc0" d="M1610 264l8-5v12l-8 6zM1610 304l9-6v13l-9 6z"/><path d="M1610 337h9v5M1619 350v6h-9M1610 366h8l1 4v15h-8M1604 393h17M1610 401h9v12"/><ellipse cx="1616" cy="416" rx="3" ry="2" stroke="#2a6fc0"/></g>
      <g fill="none" stroke="#0c7a0c"><path d="M1600 518l27-4M1600 546l27-4M1600 638l27 6M1600 688l27-4M1604 759l23-6"/></g>
      <path fill="#333" d="M1600 574l27-5v58h-27z"/><path fill="#4c511d" d="M1600 627h27v92h-27z"/>
      <path stroke="#f00" d="M1600 728l27-8M1600 847l27-6"/>
      <text x="1617" y="654" class="cadw" font-size="18">G</text>

      <clipPath id="lower"><path d="M418 880h1209v129H418z"/></clipPath>
      <g clip-path="url(#lower)">
        <circle cx="1643" cy="953" r="127" fill="#333" stroke="#900"/>
        <g fill="none" stroke="#0c7a0c">
          <circle cx="1673" cy="953" r="182"/><circle cx="1650" cy="953" r="131"/>
          <path d="M1530 890v63M1526 896l8-8M1526 949l8 8M1515 949l8 8"/>
        </g>
        <g fill="none" stroke="#900"><circle cx="1673" cy="953" r="70"/><circle cx="1674" cy="953" r="65"/><circle cx="1675" cy="953" r="58"/><path d="M1547 892h80M1540 879h87M1591 880v129M1606 880v129"/></g>
        <circle cx="1665" cy="953" r="118" fill="none" stroke="#f00"/>
      </g>
      <g stroke-width="1"><path stroke="#f00" d="M1375 952.500h89M1547 952.500h80"/><path stroke="#0c7a0c" d="M1464 952.500h83"/></g>
      <g fill="#10331f"><path d="M498 958h30v51h-30zM623 958h30v51h-30zM759 958h30v51h-30zM884 958h30v51h-30z"/></g>
      <path stroke="#800000" stroke-width="2" d="M418 988h594"/>
      <g fill="none" stroke="#0c7a0c">
        <path d="M454.500 892v42M622.500 892v42M790.500 892v42M958.500 892v42"/>
        <path d="M418 900q16 6 36 6M550 882q28 24 72 24M718 882q28 24 72 24M886 882q28 24 72 24"/>
        <path d="M451 909l6-6M619 909l6-6M787 909l6-6M955 909l6-6"/>
      </g>
      <path fill="none" stroke="#700" d="M424 883q30 10 62 0"/>
      <g>
        <use href="#oct" x="441" y="867" width="26" height="26"/><use href="#oct" x="507" y="867" width="26" height="26"/><use href="#oct" x="609" y="867" width="26" height="26"/><use href="#oct" x="674" y="867" width="26" height="26"/><use href="#oct" x="777" y="867" width="26" height="26"/><use href="#oct" x="842" y="867" width="26" height="26"/><use href="#oct" x="945" y="867" width="26" height="26"/><use href="#oct" x="1010" y="867" width="26" height="26"/>
        <use href="#oct" x="441" y="933" width="26" height="26"/><use href="#oct" x="609" y="933" width="26" height="26"/><use href="#oct" x="777" y="933" width="26" height="26"/><use href="#oct" x="945" y="933" width="26" height="26"/>
        <use href="#oct" x="417" y="975" width="26" height="26"/><use href="#oct" x="497" y="984" width="26" height="26"/><use href="#oct" x="628" y="984" width="26" height="26"/><use href="#oct" x="693" y="984" width="26" height="26"/><use href="#oct" x="758" y="984" width="26" height="26"/><use href="#oct" x="889" y="984" width="26" height="26"/>
        <use href="#oct" x="1438" y="940" width="26" height="26"/><use href="#oct" x="1601" y="940" width="26" height="26"/><use href="#oct" x="1345" y="984" width="26" height="26"/><use href="#oct" x="1457" y="984" width="26" height="26"/><use href="#oct" x="1568" y="984" width="26" height="26"/>
      </g>
      <g class="cadw" font-size="18">
        <text x="454" y="887">A</text><text x="520" y="887">D</text><text x="622" y="887">A</text><text x="687" y="887">D</text><text x="790" y="887">A</text><text x="855" y="887">D</text><text x="958" y="887">A</text><text x="1023" y="887">D</text>
        <text x="454" y="953">4</text><text x="622" y="953">4</text><text x="790" y="953">4</text><text x="958" y="953">4</text>
        <text x="430" y="995">C</text><text x="510" y="1004">2</text><text x="641" y="1004">3</text><text x="706" y="1004">4</text><text x="771" y="1004">5</text><text x="902" y="1004">6</text>
        <text x="1451" y="960">3</text><text x="1614" y="960">F</text><text x="1358" y="1004">7</text><text x="1470" y="1004">8</text><text x="1581" y="1004">9</text>
        <text transform="translate(1523 922) rotate(-90)">3200</text>
      </g>
      <g><path stroke="#0f0" stroke-width="3" d="M468 956v-16"/><path fill="#0f0" d="M463 941l5-12 5 12z"/><path stroke="#f00" stroke-width="3" d="M471 959h16"/><path fill="#f00" d="M486 954l11 5-11 5z"/><circle cx="468" cy="959" r="5" fill="#0000c0"/><path fill="none" stroke="#0f0" d="M464 917l4 6 4-6M468 923v6"/><path stroke="#f00" d="M500 954l8 11M508 954l-8 11"/></g>
    </svg>
  </div>

  <aside class="display">
    <div class="phead"><svg class="grip"><use href="#dots"/></svg><span>显示设置</span><button class="x" aria-label="关闭显示设置"><svg width="10" height="10"><use href="#close"/></svg></button></div>
    <div class="dtabs"><button class="on">图元显示</button><button>楼层显示</button></div>
    <div class="dbox">
      <table>
        <thead><tr><th>图层构件</th><th class="n">显示图元</th><th class="n">显示名称</th></tr></thead>
        <tbody>
          <tr class="l0"><td><button aria-label="折叠">−</button>所有构件</td><td><input type="checkbox" class="part" aria-label="所有构件 图元"></td><td><input type="checkbox" aria-label="所有构件 名称"></td></tr>
          <tr class="l1"><td><button aria-label="折叠">−</button>施工段</td><td><input type="checkbox" class="part" aria-label="施工段 图元"></td><td><input type="checkbox" aria-label="施工段 名称"></td></tr>
          <tr><td>土方工程</td><td><input type="checkbox" aria-label="土方工程 图元"></td><td><input type="checkbox" aria-label="土方工程 名称"></td></tr>
          <tr><td>基础工程</td><td><input type="checkbox" checked aria-label="基础工程 图元"></td><td><input type="checkbox" aria-label="基础工程 名称"></td></tr>
          <tr><td>主体结构</td><td><input type="checkbox" aria-label="主体结构 图元"></td><td><input type="checkbox" aria-label="主体结构 名称"></td></tr>
          <tr><td>二次结构</td><td><input type="checkbox" aria-label="二次结构 图元"></td><td><input type="checkbox" aria-label="二次结构 名称"></td></tr>
          <tr><td>装饰装修</td><td><input type="checkbox" aria-label="装饰装修 图元"></td><td><input type="checkbox" aria-label="装饰装修 名称"></td></tr>
          <tr><td>外墙工程</td><td><input type="checkbox" aria-label="外墙工程 图元"></td><td><input type="checkbox" aria-label="外墙工程 名称"></td></tr>
          <tr><td>其它土建</td><td><input type="checkbox" aria-label="其它土建 图元"></td><td><input type="checkbox" aria-label="其它土建 名称"></td></tr>
          <tr class="end"><td>钢筋工程</td><td><input type="checkbox" checked aria-label="钢筋工程 图元"></td><td><input type="checkbox" aria-label="钢筋工程 名称"></td></tr>
          <tr class="l1"><td><button aria-label="折叠">−</button>轴线</td><td><input type="checkbox" checked aria-label="轴线 图元"></td><td><input type="checkbox" disabled aria-label="轴线 名称"></td></tr>
          <tr><td>轴网</td><td><input type="checkbox" checked aria-label="轴网 图元"></td><td><input type="checkbox" disabled aria-label="轴网 名称"></td></tr>
          <tr class="end"><td>辅助轴线</td><td><input type="checkbox" checked aria-label="辅助轴线 图元"></td><td><input type="checkbox" disabled aria-label="辅助轴线 名称"></td></tr>
          <tr class="l1"><td><button aria-label="折叠">−</button>柱</td><td><input type="checkbox" class="part" aria-label="柱类 图元"></td><td><input type="checkbox" aria-label="柱类 名称"></td></tr>
          <tr><td>柱</td><td><input type="checkbox" aria-label="柱 图元"></td><td><input type="checkbox" aria-label="柱 名称"></td></tr>
          <tr><td>构造柱</td><td><input type="checkbox" checked aria-label="构造柱 图元"></td><td><input type="checkbox" aria-label="构造柱 名称"></td></tr>
          <tr><td>砌体柱</td><td><input type="checkbox" aria-label="砌体柱 图元"></td><td><input type="checkbox" aria-label="砌体柱 名称"></td></tr>
          <tr class="end"><td>约束边缘非阴影区</td><td><input type="checkbox" aria-label="约束边缘非阴影区 图元"></td><td><input type="checkbox" aria-label="约束边缘非阴影区 名称"></td></tr>
          <tr class="l1"><td><button aria-label="折叠">−</button>墙</td><td><input type="checkbox" class="part" aria-label="墙 图元"></td><td><input type="checkbox" aria-label="墙 名称"></td></tr>
          <tr><td>剪力墙</td><td><input type="checkbox" aria-label="剪力墙 图元"></td><td><input type="checkbox" aria-label="剪力墙 名称"></td></tr>
          <tr><td>人防门框墙</td><td><input type="checkbox" checked aria-label="人防门框墙 图元"></td><td><input type="checkbox" aria-label="人防门框墙 名称"></td></tr>
          <tr><td>砌体墙</td><td><input type="checkbox" aria-label="砌体墙 图元"></td><td><input type="checkbox" aria-label="砌体墙 名称"></td></tr>
          <tr><td>砌体加筋</td><td><input type="checkbox" aria-label="砌体加筋 图元"></td><td><input type="checkbox" aria-label="砌体加筋 名称"></td></tr>
          <tr><td>保温墙</td><td><input type="checkbox" aria-label="保温墙 图元"></td><td><input type="checkbox" aria-label="保温墙 名称"></td></tr>
          <tr><td>暗梁</td><td><input type="checkbox" aria-label="暗梁 图元"></td><td><input type="checkbox" aria-label="暗梁 名称"></td></tr>
          <tr><td>墙垛</td><td><input type="checkbox" aria-label="墙垛 图元"></td><td><input type="checkbox" aria-label="墙垛 名称"></td></tr>
          <tr class="end"><td>幕墙</td><td><input type="checkbox" aria-label="幕墙 图元"></td><td><input type="checkbox" aria-label="幕墙 名称"></td></tr>
          <tr class="l1"><td><button aria-label="折叠">−</button>门窗洞</td><td><input type="checkbox" aria-label="门窗洞 图元"></td><td><input type="checkbox" aria-label="门窗洞 名称"></td></tr>
          <tr><td>门</td><td><input type="checkbox" aria-label="门 图元"></td><td><input type="checkbox" aria-label="门 名称"></td></tr>
          <tr><td>窗</td><td><input type="checkbox" aria-label="窗 图元"></td><td><input type="checkbox" aria-label="窗 名称"></td></tr>
          <tr><td>门联窗</td><td><input type="checkbox" aria-label="门联窗 图元"></td><td><input type="checkbox" aria-label="门联窗 名称"></td></tr>
          <tr><td>墙洞</td><td><input type="checkbox" aria-label="墙洞 图元"></td><td><input type="checkbox" aria-label="墙洞 名称"></td></tr>
          <tr><td>带形窗</td><td><input type="checkbox" aria-label="带形窗 图元"></td><td><input type="checkbox" aria-label="带形窗 名称"></td></tr>
          <tr><td>带形洞</td><td><input type="checkbox" aria-label="带形洞 图元"></td><td><input type="checkbox" aria-label="带形洞 名称"></td></tr>
        </tbody>
      </table>
      <i class="thumb"></i>
    </div>
    <div class="dfoot"><button class="plainbtn">恢复默认设置</button></div>
  </aside>

  <div class="dialog" role="dialog" aria-label="选择参数化图形">
    <header><h2>选择参数化图形</h2><button aria-label="最大化"><svg width="12" height="12"><path class="s" d="M1.500 1.500h9v9h-9z"/></svg></button><button aria-label="关闭对话框"><svg width="12" height="12"><path class="s" d="M1 1l10 10M11 1L1 11"/></svg></button></header>
    <div class="dhead">
      <span class="lab">参数化截面类型<b lang="zh-TW">：</b></span>
      <span>单位<b lang="zh-TW">：</b></span><span class="mm">mm</span>
      <label><input type="radio" name="slope" checked>角度放坡形式</label>
      <label><input type="radio" name="slope">底宽放坡形式</label>
      <button class="blue">配筋形式</button>
    </div>
    <div class="dmain">
      <div class="shapes">
        <div class="cells">
          <button><svg viewBox="0 0 140 140"><g fill="none"><path class="y" d="M26.500 22.500h110v55h-110z"/><path class="d" d="M12.500 22v55M8 22.500h15M8 77.500h15M26 91.500h111M26.500 82v13M136.500 82v13"/></g><use href="#blk" x="67" y="42" width="22" height="14" color="#fff"/><g class="lb"><text transform="translate(8 54) rotate(-90)">A</text><text x="78" y="88">B</text></g><text class="t" x="56" y="114" font-size="14">矩形承台</text></svg></button>
          <button><svg viewBox="0 0 140 140"><g id="tri3"><path class="y" d="M62.500 32.500h18l40 58-8 16h-81l-10-16z"/><g class="w"><circle cx="71" cy="52" r="9.500"/><circle cx="47" cy="90" r="9.500"/><circle cx="95" cy="90" r="9.500"/></g><use href="#blk" x="63" y="70" width="17" height="11" color="#fff"/><path class="d" d="M62 26.500h19M62.500 23v6M80.500 23v6M129.500 32v74M122 32.500h12M122 52.500h12M122 90.500h12M127 106.500h5M13 117.500h116M25.500 110v10M31.500 110v10M47.500 110v10M95.500 110v10M111.500 110v10M117.500 110v10"/><g class="ls"><text x="66" y="23">x4</text><text x="13" y="115">x1</text><text x="34" y="115">x2</text><text x="66" y="115">x3</text><text x="98" y="115">x2</text><text x="118" y="115">x1</text><text transform="translate(125 47) rotate(-90)">y3</text><text transform="translate(125 76) rotate(-90)">y2</text><text transform="translate(125 104) rotate(-90)">y1</text></g></g><text class="t" x="48" y="131" font-size="10">三桩承台一</text></svg></button>
          <button><svg viewBox="0 0 140 140"><use href="#tri3" x="-2" y="-4"/><text class="t" x="46" y="127" font-size="10">三桩承台二</text></svg></button>
          <button><svg viewBox="0 0 140 140"><text class="t" x="19" y="29" font-size="20">阶式四桩台</text><path class="o" d="M43.500 45.500h65v64h-65z"/><use href="#blk" x="71" y="70" width="10" height="15" color="#c3c63c"/><path class="e" d="M33 46v63M26 45.500h15M26 109.500h15M43.500 112v14M108.500 112v14M44 118.500h64"/><path d="M33 46l-3 5h6zM33 109l-3-5h6zM44 118l5-3v6zM108 118l-5-3v6z"/><g class="lb"><text x="16" y="79" font-size="16">A</text><text x="72" y="134" font-size="16">A</text></g></svg></button>
          <button><svg viewBox="0 0 140 140"><text class="t" x="19" y="29" font-size="20">阶式五桩台</text><path class="o" d="M83 43.500l36 24-14 40H61l-14-40z"/><use href="#blk" x="75" y="71" width="15" height="10" color="#c3c63c"/><path class="e" d="M40 44v64M33 44.500h15M33 108.500h15M61.500 111v14M105.500 111v14M62 117.500h43"/><path d="M40 45l-3 5h6zM40 108l-3-5h6zM62 117l5-3v6zM105 117l-5-3v6z"/><g class="lb"><text transform="translate(31 79) rotate(-90)" font-size="16">A</text><text class="m" x="49" y="133" font-size="13">B=A/1.5385</text></g></svg></button>
          <button><svg viewBox="0 0 140 140"><text class="t" x="19" y="29" font-size="20">阶式六桩台</text><path class="o" d="M69 43.500h36l19 32-19 32H69l-19-32z"/><use href="#blk" x="80" y="70" width="15" height="10" color="#c3c63c"/><path class="e" d="M46 43v64M40 43.500h14M40 107.500h14M69.500 110v14M105.500 110v14M70 116.500h35"/><path d="M46 44l-3 5h6zM46 107l-3-5h6zM70 116l5-3v6zM105 116l-5-3v6z"/><g class="lb"><text transform="translate(37 76) rotate(-90)" font-size="16">A</text><text class="m" x="51" y="133" font-size="13">B=A/1.7326</text></g></svg></button>
          <button class="sel"><svg viewBox="0 0 140 140"><g id="uneq"><path class="y" d="M72.500 25.500h18l40 58v26h-99v-26z"/><g class="w"><circle cx="81" cy="46" r="9.500"/><circle cx="57" cy="93" r="9.500"/><circle cx="105" cy="93" r="9.500"/></g><use href="#blk" x="73" y="68" width="16" height="10" color="#fff"/><path class="d" d="M72 19.500h19M72.500 17v5M90.500 17v5M23.500 25v85M21 25.500h9M21 46.500h9M21 83.500h9M21 93.500h9M21 109.500h9M31 119.500h99M31.500 113v9M57.500 113v9M81.500 113v9M105.500 113v9M130.500 113v9"/><g class="ls"><text x="76" y="16">x5</text><text x="39" y="116">x1</text><text x="64" y="116">x2</text><text x="88" y="116">x2</text><text x="113" y="116">x1</text><text transform="translate(19 41) rotate(-90)">y4</text><text transform="translate(19 70) rotate(-90)">y3</text><text transform="translate(19 93) rotate(-90)">y2</text><text transform="translate(19 107) rotate(-90)">y1</text></g></g><text class="t" x="54" y="133" font-size="10">不等边承台一</text></svg></button>
          <button><svg viewBox="0 0 140 140"><g id="skew"><path class="y" d="M51.500 23.500h14l60 39v24h-104v-20z"/><g class="w"><circle cx="61" cy="38" r="8"/><circle cx="40" cy="74" r="8"/><circle cx="107" cy="74" r="8"/></g><use href="#blk" x="57" y="54" width="12" height="9" color="#fff"/><path class="d" d="M34 17.500h17M54 17.500h20M51.500 15v5M61.500 15v5M65.500 15v5M14.500 23v64M12 23.500h8M12 38.500h8M12 66.500h8M12 74.500h8M12 86.500h8M135.500 62v13M129 62.500h8M129 74.500h8M21 93.500h104M21.500 90v6M40.500 90v6M61.500 90v6M107.500 90v6M125.500 90v6"/><g class="ls s6"><text x="34" y="15">x5</text><text x="66" y="15">x6</text><text x="26" y="91">x1</text><text x="46" y="91">x2</text><text x="80" y="91">x3</text><text x="112" y="91">x4</text><text transform="translate(12 35) rotate(-90)">y4</text><text transform="translate(12 57) rotate(-90)">y3</text><text transform="translate(12 75) rotate(-90)">y2</text><text transform="translate(12 85) rotate(-90)">y1</text><text transform="translate(133 73) rotate(-90)">y5</text></g></g><text class="t" x="45" y="114" font-size="11">不等边承台二</text></svg></button>
          <button><svg viewBox="0 0 140 140"><use href="#uneq" x="-2" y="-1"/><text class="t" x="46" y="132" font-size="10">不等边承台三</text></svg></button>
          <button><svg viewBox="0 0 140 140"><use href="#skew" x="-2" y="2"/><text class="t" x="44" y="116" font-size="11">不等边承台四</text></svg></button>
          <button><svg viewBox="0 0 140 140"><text class="t h" x="18" y="28" font-size="21">等腰五桩台</text><path class="y" d="M55 46.500l32 22-12 37H36l-13-37z"/><use href="#blk" x="50" y="73" width="9" height="13" color="#ff0"/><path class="d" d="M106.500 45v61M97 45.500h12M97 68.500h12M97 106.500h12M14 105.500h22M24 105q0-8 6-10"/><path d="M105 50l2-4 2 4zM105 64l2 4 2-4zM105 73l2-4 2 4zM105 102l2 4 2-4z"/><g class="lb bold"><text x="113" y="62" font-size="13">B</text><text x="113" y="94" font-size="13">C</text><text x="7" y="95" font-size="14" class="m">jd</text></g></svg></button>
          <button><svg viewBox="0 0 140 140"><text class="t" x="19" y="33" font-size="20">锥式二桩台</text><path class="o" d="M33.500 53.500h84v47h-84zM63.500 69.500h24v16h-24zM66 71h19v13H66zM33 53l30 16M117 53L88 69M33 100l30-15M117 100L88 85M70 82l12-11"/><path class="e" d="M19 54v46M12 53.500h15M12 100.500h15M33.500 108v20M117.500 108v20"/><path d="M19 54l-3 5h6zM19 100l-3-5h6z"/><g class="lb"><text x="6" y="82" font-size="16">A</text><text x="40" y="81" font-size="15">a1</text><text x="67" y="100" font-size="15">b1</text></g></svg></button>
        </div>
        <i class="thumb"></i>
      </div>
      <div class="preview">
        <svg viewBox="880 262 723 577" preserveAspectRatio="xMinYMin slice">
          <clipPath id="cap"><path d="M1018 400h57l94 158v77H925v-77z"/></clipPath>
          <g fill="none" stroke="#fff" shape-rendering="crispEdges">
            <path stroke="#0f0" clip-path="url(#cap)" d="M927 635l121-235M932 635l121-235M937 635l121-235M942 635l121-235M946 635l121-235M951 635l121-235M956 635l121-235M961 635l121-235M966 635l121-235M970 635l121-235M975 635l121-235M980 635l121-235M985 635l121-235M1168 635l-121-235M1163 635l-121-235M1158 635l-121-235M1153 635l-121-235M1149 635l-121-235M1144 635l-121-235M1139 635l-121-235M1134 635l-121-235M1129 635l-121-235M1125 635l-121-235M1120 635l-121-235M1115 635l-121-235M1110 635l-121-235"/>
            <path fill="#000" d="M1026.500 511.500h49v45h-49z"/>
            <path d="M1027 526l11-14M1027 541l24-29M1027 555l37-43M1039 556l37-44M1051 556l25-30M1063 556l13-16"/>
            <path stroke="#0f0" clip-path="url(#cap)" d="M1026 530l10-19M1026 539l15-28M1060 511l16 31M1066 511l10 20"/>
            <path stroke="#ff0" d="M1017 402.500h59M1013 410.500h67M1010 417.500h74M1006 424.500h80M1002 432.500h90M998 439.500h97M995 446.500h104M991 454.500h112M987 461.500h120M983 468.500h128"/>
            <path stroke="#0ff" d="M1065 635l66-139M1083 635l59-123M1098 635l51-108M1112 635l46-95M1127 635l40-79M1142 635l27-55"/>
            <path stroke="#f00" d="M1032 635l-67-142M1016 635l-61-127M1001 635l-54-113M985 635l-46-98M970 635l-40-81M955 635l-29-60"/>
            <path stroke="#f0f" d="M928 553.500h239M925 558.500h244M925 564.500h244M925 569.500h244M925 575.500h244M925 580.500h244M925 586.500h244M925 591.500h244M925 597.500h244M925 602.500h244M925 606.500h244"/>
            <path d="M1018 400.500h57l94 158v77H925.500v-77z"/>
            <g stroke-dasharray="6 3"><circle cx="1048" cy="452" r="27.500"/><circle cx="982" cy="580" r="27.500"/><circle cx="1112" cy="580" r="27.500"/></g>
            <path d="M1048.500 366v21M1039 375.500h18M1039 379.500h18M1018.500 388v13M1075.500 388v13M1018 393.500h19M1058 393.500h17M1048.500 400v43M961 466l88 45 89-45M1088.500 470v-77h19M1035.500 543v124h101M1048.500 612v77M1039 681.500h18M1039 686.500h18"/>
            <path d="M1003 487l46 24 46-24" stroke-width="4" stroke-dasharray="1 3"/>
            <path d="M1085 474l6-6M1085 466l6-6M1085 459l6-6M1085 451l6-6M1085 444l6-6M1085 437l6-6M1085 430l6-6"/>
            <path d="M1032 560l6-6M1032 566l6-6M1032 571l6-6M1032 577l6-6M1032 582l6-6M1032 588l6-6M1032 593l6-6M1032 599l6-6M1032 604l6-6M1032 609l6-6"/>
            <path d="M925.500 639v10M982.500 639v10M1048.500 641v8M1112.500 639v10M1169.500 639v10M923 645.500h20M964 645.500h40M1026 645.500h145"/>
            <path d="M1181.500 400v6M1181.500 428v74M1181.500 532v26M1181.500 580v16M1181.500 619v18M1174 400.500h11M1174 450.500h11M1174 580.500h11M1174 635.500h11M892 579.500h29M1189 579.500h29"/>
            <path d="M1375.500 411v74M1406.500 411v74M1365 411.500h19l3-5 1 11 3-6h22M1268.500 485.500h233v75h-233zM1240.500 484v26M1240.500 534v28M1235 485.500h12M1235 560.500h12M1262.500 512v30M1257 512.500h10M1257 542.500h10"/>
            <path stroke="#f0f" stroke-width="2" d="M1274 512v30h222v-30"/><path stroke="#ff0" stroke-width="2" d="M1277 501v35h215v-33"/>
            <path d="M1288.500 667V545.500h31V667M1373.500 667V545.500h31V667M1450.500 667V545.500h31V667M1279 667.500h20l3-5 1 11 3-6h21M1363 667.500h20l3-5 1 11 3-6h21M1441 667.500h18l4-5 1 11 3-6h21"/>
            <path d="M1296.500 539V518.500H1314M1389 525.500h-48l-1 12M1361 525l-1 11M1379 525l-1 11M1487 531.500h-32l-3 11M1463 531l-5 11M1471 531l-5 12M1480 531l-6 12M1484 531l-6 12M1486 499v15M1486 502l9 10M1486 510l9 10M1487 522l9 8M1408.500 540v33H1435M1331.500 545v17M1326 545.500h10M1510.500 503v33M1505 503.500h10M1505 536.500h10M1347 720.500h59"/>
            <path stroke="#0ff" stroke-width="3" stroke-dasharray="2 16.270" d="M1283 537.500h205"/><path stroke="#0f0" stroke-width="2" stroke-dasharray="2 3.500" d="M1286 543.500h36M1448 543.500h36"/>
          </g>
          <g class="cz" font-size="13">
            <text x="1068" y="389">承台范围内主筋之外均匀布置</text>
            <text transform="translate(942 439) rotate(28)">桩间连接筋</text><text transform="translate(934 467) rotate(30)">布置范围</text>
            <text transform="translate(1114 461) rotate(-28)">桩间连接筋</text><text transform="translate(1125 487) rotate(-28)">布置范围</text>
            <text x="1087" y="665">桩间连接筋</text><text x="1087" y="679">布置范围</text>
            <text x="1295" y="514">分布筋</text><text x="1341" y="522">分布筋</text><text x="1431" y="529">桩间连接筋</text><text x="1410" y="571">桩间连接筋</text>
            <text transform="translate(1471 515) rotate(-90)">侧面筋</text><text transform="translate(1517 600) rotate(-90)">分布筋弯折</text><text transform="translate(1265 632) rotate(-90)">桩间连接筋弯折</text>
            <text x="970" y="715" font-size="31" class="thin">不等边承台一</text>
          </g>
          <g class="cg" font-size="12">
            <text x="1037" y="398">580</text><text x="1089" y="406">C14@200</text><text transform="translate(941 453) rotate(28)">8C22</text><text transform="translate(928 479) rotate(28)">900</text><text transform="translate(1119 470) rotate(-25)">10C20</text><text transform="translate(1134 498) rotate(-25)">900</text>
            <text x="943" y="650">500</text><text x="1004" y="650">875</text><text x="1152" y="665">10C20</text><text x="1140" y="679">900</text>
            <text transform="translate(1186 428) rotate(-90)">500</text><text transform="translate(1187 531) rotate(-90)">1397</text><text transform="translate(1186 579) rotate(-90)">133</text><text transform="translate(1186 618) rotate(-90)">500</text>
            <text transform="translate(1245 533) rotate(-90)">500</text><text transform="translate(1258 530) rotate(-90)">0</text><text transform="translate(1345 562) rotate(-90)">100</text><text transform="translate(1484 519) rotate(-90)">CMJ</text><text transform="translate(1525 513) rotate(-90)">d</text>
          </g>
          <g class="cs" font-size="28"><text x="900" y="576">1</text><text x="1197" y="576">1</text><text x="1356" y="717">1</text><text x="1386" y="717">1</text></g><path stroke="#fff" shape-rendering="crispEdges" d="M1371 706.500h14"/>
        </svg>
        <input class="inline" value="10*d" aria-label="弯折长度">
      </div>
    </div>
    <footer><button class="blue">确定</button><button class="plainbtn">取消</button></footer>
    <svg class="grab" viewBox="0 0 8 8"><path fill="#777" d="M6 0h2v2H6zM3 3h2v2H3zM6 3h2v2H6zM0 6h2v2H0zM3 6h2v2H3zM6 6h2v2H6z"/></svg>
  </div>
</main>

<footer class="status">
  <span class="s1">层高<b lang="zh-TW">：</b> 2</span><span class="s2">标高<b lang="zh-TW">：</b> -2~0</span><span class="s3">选中图元<b lang="zh-TW">：</b>0</span><span class="s4">隐藏图元<b lang="zh-TW">：</b>0</span>
  <div class="snaps">
    <button aria-label="正交"><svg class="i"><path class="k" d="M2.500 2v11.500H15M2.500 9h4v4"/></svg></button>
    <button class="wide on" aria-label="捕捉"><svg class="i"><rect class="k" x="2.500" y="3.500" width="12" height="11" rx="2"/><circle class="b" cx="3" cy="3" r="2"/></svg><i class="tri"></i></button>
    <button class="dim" aria-label="交点"><svg class="i"><path class="k" d="M1 1l14 14M15 1L1 15"/></svg></button>
    <button class="wide" aria-label="角度"><svg class="i"><path class="k" d="M1 14.500h13M2 12L12 2M7 5l3 3"/></svg><i class="tri"></i></button>
    <button class="wide" aria-label="偏移"><svg class="i"><path class="k" d="M0 4.500h7M3.500 1v7"/><path class="kf" d="M6 10h10v5H6z"/></svg><i class="tri"></i></button>
    <button aria-label="图元选择"><svg class="i"><path class="kf" d="M3 2h8v9H3z"/><path class="k" d="M1.500.500h11v12h-11zM12 4h2v6"/><path class="kf" d="M9 8l6 5-3 .5-1 2.500z"/></svg></button>
    <button aria-label="折线选择"><svg class="i"><path class="k" d="M2 14c0-6 2-9 5-9l7-3"/><circle class="k" cx="2" cy="14" r="1"/><circle class="k" cx="14" cy="2" r="1"/><path class="kf" d="M9 8l6 4-3 .5-2 2.500z"/></svg></button>
    <button class="bare" aria-label="全屏"><svg class="i"><path class="k" d="M1 15l5-5M1 10v5h5M15 1L9 7M10 1h5v5"/></svg></button>
  </div>
</footer>

<footer class="taskbar">
  <button class="orb" aria-label="开始"><svg width="38" height="38" viewBox="0 0 38 38"><circle cx="19" cy="19" r="17.500" fill="#2a5f8c" stroke="#123a5c"/><ellipse cx="19" cy="11" rx="14" ry="9" fill="#a9c9dd"/><ellipse cx="19" cy="29" rx="12" ry="7" fill="#35b0d8"/><path fill="#e8641e" d="M10 12q4-3 8-1l-1.500 7q-4-2-8 0z"/><path fill="#8cc63e" d="M19.500 11.500q4 2 9-.5L26.500 18q-4 2-8.500.5z"/><path fill="#3b9ae0" d="M8 19.500q4-2 8 0L14.500 26q-4-2-8 .5z"/><path fill="#fdc52c" d="M17.500 20q4 2 9 0L25 27q-5 2-9 0z"/></svg></button>
  <i class="grid"></i>
  <button class="app" aria-label="广联达"><svg width="34" height="34" viewBox="0 0 34 34"><path fill="#1a8cf0" d="M31 2c-1 6-6 7-11 7-7 0-9 4-9 9 0 6 5 9 10 8 3-1 4-3 4-5h-6c2-5 7-6 12-5 1 8-4 16-13 16C9 32 3 26 4 17l-2-1 2-2C6 6 13 4 19 4c5 0 9 0 12-2z"/><path fill="none" stroke="#52c4fc" stroke-width="2" d="M27 6c-6 3-18 0-20 11"/></svg></button>
  <button class="app" aria-label="云盘"><svg width="34" height="34" viewBox="0 0 34 34"><rect x="1" y="1" width="32" height="32" rx="5" fill="#fbb017"/><path fill="none" stroke="#fff" stroke-width="4" d="M13 25H9.500a5 5 0 0 1 1-10C12 9 20 8 22 14l-8 9M20 25h4a5 5 0 0 0 0-10"/></svg></button>
  <button class="app" aria-label="浏览器"><svg width="34" height="34" viewBox="0 0 34 34"><circle cx="16.500" cy="18" r="14.500" fill="#fff"/><path fill="none" stroke="#4bb527" stroke-width="5" d="M8 18h17c0-11-16-11-17 0 0 9 12 11 16 4"/><path fill="none" stroke="#4bb527" stroke-width="2" d="M5 29C4 20 20 4 30 3c-1 3-3 5-5 7"/></svg></button>
  <button class="app"><span class="yu">预</span></button>
  <button class="app on" aria-label="土建计量"><svg width="34" height="34" viewBox="0 0 34 34"><rect x="1" y="1" width="32" height="32" rx="5" fill="#2468f2"/><path fill="#fff" d="M6 12l17-6 6 5-6 3-16 2z"/><path fill="#dfe8ff" d="M14 15l7-2v16l-7-3z"/></svg></button>
  <div class="tray">
    <i class="grid"></i>
    <svg class="t20"><path fill="#d6d6d6" d="M1 8h18v9H1z"/><path stroke="#666" stroke-dasharray="2 1" d="M3 10.500h14M3 12.500h14M5 14.500h10"/><path fill="none" stroke="#d6d6d6" d="M8 8c0-4 5 0 6-5"/></svg>
    <svg class="t20"><circle cx="10" cy="9" r="8" fill="#1229b8" stroke="#cfd6ff"/><text x="10" y="13" text-anchor="middle" class="q">?</text></svg>
    <svg class="t20"><path fill="none" stroke="#fff" d="M8.500 3V1.500h5v5H12M6.500 3.500h5v4h-5z"/><path fill="#fff" d="M7 14h6l-3 3z"/></svg>
    <svg class="t20" viewBox="0 0 34 34"><path fill="#24a0fa" d="M31 2c-1 6-6 7-11 7-7 0-9 4-9 9 0 6 5 9 10 8 3-1 4-3 4-5h-6c2-5 7-6 12-5 1 8-4 16-13 16C9 32 3 26 4 17l-2-1 2-2C6 6 13 4 19 4c5 0 9 0 12-2z"/></svg>
    <svg class="t20"><rect x="2" y="2" width="16" height="16" rx="2" fill="#fff"/><path fill="none" stroke="#1a73e8" stroke-width="3" d="M14 6c-5-3-9 0-8 5"/><path fill="#f58a1f" d="M4 12h12v5H4z"/></svg>
    <svg class="t20"><rect x="2" y="2" width="16" height="16" rx="2" fill="#fbaa1c"/><path fill="none" stroke="#fff" stroke-width="2" d="M8 14H6a3 3 0 0 1 0-6c1-3 6-3 6 0l-4 4M12 14h2a3 3 0 0 0 0-6"/></svg>
    <svg class="t20"><circle cx="10" cy="10" r="7" fill="#4bb527"/><path fill="none" stroke="#fff" stroke-width="2" d="M6 10h8c0-6-8-6-8 0 0 4 5 5 7 3"/></svg>
    <svg class="t20"><path fill="#999" stroke="#ddd" d="M3 2h5v8H3zM4 10h3v6H4z"/><circle cx="13" cy="13" r="5" fill="#2fa52f"/><path fill="none" stroke="#fff" stroke-width="2" d="M10 13l2 2 4-4"/></svg>
    <svg class="t20"><path fill="#e05a3a" stroke="#fff" d="M2 7h4l6-5v15l-6-5H2z"/><path fill="none" stroke="#c33" d="M14 6q3 4 0 8"/></svg>
    <svg class="t20"><circle cx="10" cy="10" r="7.500" fill="#f5d21f"/><circle cx="10" cy="10" r="5" fill="#3a9a2b"/><path stroke="#f5e65a" stroke-width="2" d="M10 6v8M6 10h8"/></svg>
    <svg class="t20"><path fill="#fff" d="M2 14h2v3H2zM5 12h2v5H5zM8 10h2v7H8zM11 7h2v10h-2zM14 4h2v13h-2z"/></svg>
    <svg class="t20"><path fill="#fff" d="M2 7h3l5-4v14l-5-4H2z"/><path fill="none" stroke="#fff" d="M12 7q2 3 0 6M14 5q4 5 0 10"/></svg>
    <div class="clock"><span>16:35</span><span>2025/3/22</span></div>
    <svg class="next" width="16" height="16"><path fill="#fff" d="M0 0h16v16H0z"/><path fill="#123" d="M6 4l4 4-4 4z"/></svg>
    <button class="peek" aria-label="显示桌面"></button>
  </div>
</footer>
</body>
</html>
```
FILE: styles.css
```css
*{box-sizing:border-box}
:root{--k:#4a5468;--b:#1a73e8;--l:#cfe2fb}
body{margin:0;height:100vh;display:flex;flex-direction:column;overflow:hidden;background:#fff;color:#2b2b2b;font:12px/16px "Noto Sans","Noto Sans CJK SC",sans-serif}
button,input,select{font:inherit;color:inherit;margin:0;padding:0;border:0;background:none}
a{color:inherit;text-decoration:none}
h1,h2{margin:0;font-weight:400}
ul{margin:0;padding:0;list-style:none}
svg{display:block;flex:none}
/* full-width punctuation centred in its cell */
b[lang]{font-weight:400;font-family:"Noto Sans CJK TC",sans-serif;line-height:1}
.defs{position:absolute;width:0;height:0}
.i{width:16px;height:16px}
.k{fill:none;stroke:var(--k)}
.b{fill:none;stroke:var(--b)}
.s{fill:none;stroke:currentColor}
.f{fill:var(--b)}
.kf{fill:var(--k)}
.l{fill:var(--l)}
.tinyt{font:bold 6px "Liberation Sans",sans-serif;fill:var(--b)}
.off{--k:#c2c2c2;--b:#c2c2c2;--l:#fff;color:#b0b0b0}
.tri{display:inline-block;flex:none;border:3px solid transparent;border-top:4px solid #777;border-bottom:0}
.tri.wide{border-width:4px 4px 0}
.off .tri{border-top-color:#b8b8b8}
.tri.bar{position:relative}
.tri.bar::before{content:"";position:absolute;left:-3px;top:-8px;width:6px;height:1px;background:#777}

.titlebar{display:grid;grid-template-columns:1fr auto 1fr;align-items:center;height:27px;flex:none}
.titlebar h1{font-size:12px;line-height:16px}
.quick{display:flex;align-items:center}
.quick button{width:34px;height:26px;display:flex;align-items:center;justify-content:center;gap:4px}
.quick .slim{width:18px}
.quick .brand{width:35px;padding-left:4px}
.brand .i{height:20px}
.winctl{display:flex;justify-content:flex-end;gap:23px;padding-right:13px;color:#555}
.winctl button{width:12px;height:14px;display:flex;align-items:center;justify-content:center}

.tabs{display:flex;gap:20px;height:29px;padding-left:18px;border-bottom:1px solid #ececec;flex:none}
.tabs>button{padding:5px 3px 0;font-size:13px;line-height:16px;height:29px;border-bottom:3px solid transparent}
.tabs>.on{color:#1a73e8;font-weight:700;border-color:#1a73e8}
.account{margin-left:auto;display:flex;align-items:center;gap:8px;padding:7px 6px 0 0}
.account button{height:18px;display:flex;align-items:center}
.ask{display:flex;align-items:center;width:318px;height:19px;border:1px solid #d8d8d8;border-radius:2px;padding:0 6px 0 3px;color:#999}
.ask input{flex:1;min-width:0}
input::placeholder{color:#999;opacity:1}
.user{padding-right:10px}
.help{font-size:16px;gap:2px}
.tabs .help{color:#4a5468}

.ribbon{display:flex;height:101px;border-bottom:1px solid #d8d8d8;flex:none}
.group{position:relative;display:flex;flex-direction:column;padding:4px 0 0 10px}
.group::after{content:"";position:absolute;right:0;top:3px;bottom:4px;width:1px;background:#dcdcdc}
.tools{display:grid;grid-auto-flow:column;grid-template-rows:repeat(3,24px)}
.tools button{display:flex;align-items:center;gap:4px;white-space:nowrap}
.tools .tri{margin-left:1px}
.tools .big{grid-row:span 3;flex-direction:column;gap:0;justify-content:flex-start}
.big svg{margin:2px 0 6px}
.group footer{margin-top:auto;padding-bottom:4px;display:flex;align-items:center;justify-content:center;gap:8px;margin-left:-10px}
.g1{width:233px;padding-left:8px}
.g1 .tools{grid-template-columns:46px 98px 80px}
.g1 .big{width:40px;height:70px;padding-top:2px}
.g1 .big svg{margin-bottom:8px}
.g1 footer{margin-left:-2px}
.picked{background:#c4dbf3;border-radius:2px}
.g2{width:203px}
.g2 .tools{grid-template-columns:79px 110px}
.g3{width:276px}
.g3 .tools{grid-template-columns:67px 111px 80px}
.g4{width:237px}
.g4 .tools{grid-template-columns:54px 54px 63px 50px}
.g5{width:69px}
.g5 .tools{grid-template-columns:33px 20px}
.g6{width:184px}
.g6 .tools{grid-template-columns:69px 100px}
.g6 .big{width:60px}
.g7{width:78px;padding-left:7px}
.g7 .tools{grid-template-columns:50px}
.g7 footer{margin-left:-3px}
.g7 .tri{margin-top:6px}
.g8{width:315px}
.g8 .tools{grid-template-columns:102px 113px 80px}

.combos{display:flex;height:31px;background:#f0f0f0;flex:none}
.combos label{width:100px;border-right:1px solid #d8d8d8;display:flex;align-items:center;padding:0 5px 0 3px}
.combos select{appearance:none;flex:1;min-width:0}
.combos .tri{border-top-color:#555}

.work{position:relative;flex:1;min-height:0;display:flex;background:#fff}
.phead{height:29px;background:#eeeef0;display:flex;align-items:center;flex:none}
.grip{width:6px;height:15px;margin:0 0 0 6px}
.phead span{margin-left:12px}
.x{margin-left:auto;margin-right:9px;color:#999}
.navbar{width:130px;border:1px solid #d4d4d4;border-left-color:#e4e4e4;display:flex;flex-direction:column;flex:none}
.navbody{flex:1;min-height:0;display:flex;overflow:hidden}
.navlist{flex:1;overflow:hidden;display:flex;flex-direction:column}
.cat{height:42px;flex:none;display:flex;align-items:center;gap:14px;padding-left:11px;background:#f5f7fa}
.cat svg{width:24px;height:24px}
.cat.on{background:#e9ecf2;color:#4a84e8}
.navlist a{height:28px;line-height:28px;padding-left:21px;flex:none}
.navlist a.on{color:#1a78f0}
.rail{width:12px;display:flex;justify-content:center}
.rail i{width:4px;height:525px;margin-top:232px;border-radius:2px;background:#ececec}

.side{width:280px;margin-left:4px;display:flex;flex-direction:column;flex:none}
.panel{border:1px solid #d4d4d4;overflow:hidden}
.list{height:258px}
.props{height:530px;margin-top:4px}
.props .phead{height:30px}
.ptab{height:29px;padding:0 10px;font-size:12px}
.ptab.on{background:#fff;color:#1a78f0;margin-left:11px}
.ltools{display:flex;gap:9px;padding:6px 0 0 10px}
.ltools button{width:32px;height:26px;background:#f4f4f4;border-radius:3px;display:flex;align-items:center;justify-content:center}
.duo{display:flex;gap:1px}
.ltools .dd{width:12px}
.find{display:block;width:300px;height:26px;margin:7px 0 9px 8px;padding:0 12px;border-radius:13px;background:#f4f4f4}
.find::placeholder{color:#777}
.tree li{height:24px;display:flex;align-items:center;padding-left:6px}
.tree .leaf{padding-left:21px}
.tree span{padding:2px 4px;height:21px;line-height:17px;border-radius:2px}
.tree .sel{background:#c4dbf3;width:105px}
.open::before,.shut::before{content:"";border:3px solid transparent;border-top:4px solid #777;border-bottom:0;margin-right:3px}
.shut::before{border:3px solid transparent;border-left:4px solid #777;border-right:0;margin:0 4px 0 1px}
.props table{width:100%;border-collapse:collapse;table-layout:fixed}
.props th{height:25px;background:#ececec;font-weight:400;border-right:1px solid #d4d4d4;border-bottom:1px solid #d4d4d4;padding:0}
.props th.c1{width:101px}
.props th.c2{width:136px;font-weight:700}
.props th:last-child{text-align:left;padding-left:8px;border-right:0}
.props td{height:25px;padding:0}
.props label{padding-left:14px;color:#1a5cff;white-space:nowrap}
.plain label{color:#2b2b2b}
.props td input{width:135px;height:21px;border:1px solid #dcdcdc;padding:0 2px;display:block}
.ro input{color:#999}
.pick{display:flex;align-items:center;width:135px;height:21px;border:1px solid #5a87cc;padding-right:3px}
.props .pick input{flex:1;min-width:0;height:19px;border:0;padding-left:4px;color:#555}
.pick button{width:16px;height:13px;border:1px solid #5a9be8;border-radius:2px;background:#e6f1fd;color:#1a73e8;line-height:10px;font-weight:700;font-size:10px}
.props .sec td{background:#ececec;border-top:1px solid #fff;padding-left:21px}
.props .sec.open::before{content:none}
.sec td::before{content:"";display:inline-block;vertical-align:middle;border:3px solid transparent;border-left:4px solid #888;border-right:0;margin:0 6px 0 -10px}
.sec.open td::before{border:3px solid transparent;border-top:4px solid #888;border-bottom:0;margin:0 4px 0 -10px}
.under{padding:3px 6px}
.plainbtn{border:1px solid #c8c8c8;border-radius:3px;background:#fff}
.under .plainbtn{width:80px;height:25px}

.canvas{flex:1;min-width:0;margin:0 4px;background:#000;overflow:hidden}
.canvas svg{width:100%;height:100%}
.cadw{fill:#f2f2f2;text-anchor:middle;font-family:"Noto Sans",sans-serif}

.display{width:289px;border:1px solid #d4d4d4;display:flex;flex-direction:column;flex:none}
.dtabs{display:flex;align-items:flex-end;gap:4px;padding:2px 2px 0;height:26px;border-bottom:1px solid #c8c8c8}
.dtabs button{width:60px;height:21px;background:#dcdcdc;border-radius:3px 3px 0 0;color:#444}
.dtabs .on{width:62px;height:24px;margin-bottom:-1px;background:#fff;border:1px solid #c8c8c8;border-bottom:0;color:#1a78f0}
.dbox{flex:1;min-height:0;margin:2px 2px 0;border:1px solid #d8d8d8;overflow:hidden;display:flex}
.dbox table{flex:1;border-collapse:collapse;table-layout:fixed}
.dbox th{font-weight:400;padding:0;height:21px;border:1px solid #d8d8d8;border-top:0;border-left:0}
.dbox th.n{width:63px}
.dbox td{height:21px;padding:0;line-height:16px;border:1px solid #d8d8d8;border-left:0;text-align:center}
.dbox td:first-child{text-align:left;padding-left:41px;white-space:nowrap;background:linear-gradient(#dedede,#dedede) no-repeat 8px 0/1px 100%,linear-gradient(#dedede,#dedede) no-repeat 18px 0/1px 100%,linear-gradient(#dedede,#dedede) no-repeat 18px 10px/17px 1px}
.dbox .end td:first-child{background-size:1px 100%,1px 11px,17px 1px}
.dbox .l0 td:first-child{padding-left:2px;background:none}
.dbox .l1 td:first-child{padding-left:12px;background:linear-gradient(#dedede,#dedede) no-repeat 8px 0/1px 100%}
.dbox td button{width:13px;height:13px;border:1px solid #999;border-radius:2px;background:#fff;line-height:9px;vertical-align:-1px;margin-right:6px}
input[type=checkbox]{appearance:none;display:block;width:14px;height:14px;margin:0 auto;border:1px solid #8c8c8c;border-radius:2px;background:#fff;position:relative}
input[type=checkbox]:checked{background:#2a7fe4;border-color:#2a7fe4}
input[type=checkbox]:checked::after{content:"";position:absolute;left:4px;top:1px;width:4px;height:8px;border:solid #fff;border-width:0 2px 2px 0;transform:rotate(45deg)}
.part::after{content:"";position:absolute;inset:1px;background:#9ac7fb;border:1px solid #4a90e2}
input[type=checkbox]:disabled{background:#f0f0f0;border-color:#b4b4b4}
.thumb{width:4px;border-radius:2px;background:#e6e6e6;flex:none}
.dbox .thumb{height:155px;margin:12px 4px 0}
.dfoot{display:flex;justify-content:flex-end;padding:6px 8px 7px}
.dfoot .plainbtn{width:90px;height:26px}

.dialog{position:absolute;left:388px;right:305px;top:2px;bottom:127px;background:#fff;box-shadow:0 0 3px #555,0 2px 16px 5px rgba(0,0,0,.65);display:flex;flex-direction:column;padding:0 12px 11px}
.dialog header{display:flex;align-items:center;gap:16px;height:38px;color:#555}
.dialog h2{font-size:14px;line-height:20px;margin-right:auto;color:#2b2b2b}
.dhead{display:flex;align-items:center;height:34px;padding-bottom:4px}
.dhead .lab{width:480px}
.dhead .mm{margin:0 7px 0 6px}
.dhead label{display:flex;align-items:center;gap:4px;margin-right:7px}
input[type=radio]{appearance:none;width:14px;height:14px;border:1px solid #777;border-radius:50%}
input[type=radio]:checked{border-color:#2a7fe4;background:radial-gradient(circle,#2a7fe4 3px,#fff 4px)}
.blue{width:80px;height:26px;background:#2a7fe4;color:#fff;border-radius:3px}
.dhead .blue{margin-left:auto}
.dmain{flex:1;min-height:0;display:flex;gap:6px}
.shapes{width:474px;border:1px solid #c0c0c0;display:flex;overflow:hidden;flex:none}
.cells{display:grid;grid-template-columns:repeat(3,153px);grid-auto-rows:153px;flex:none}
.cells button{border:1px solid #d4d4d4;border-left:0;border-top:0;display:flex;align-items:center;justify-content:center}
.cells svg{width:140px;height:140px;background:#6f94ab;overflow:hidden}
.cells .sel{box-shadow:inset 0 0 0 3px #0a95ff,inset 0 0 0 6px #9cc8ff}
.shapes .thumb{height:275px;margin:12px 0 0 5px}
.y,.w,.d,.o,.e{fill:none;shape-rendering:crispEdges}
.y{stroke:#ff0}
.w{stroke:#fff}
.d{stroke:#000}
.o{stroke:#bcc247}
.e{stroke:#333}
.t{fill:#37297c;font-family:"Noto Sans CJK SC",sans-serif}
.t.h{font-weight:700}
.lb{fill:#fff;font-size:10px;font-family:"Liberation Serif",serif}
.bold{font-weight:700}
.m{font-family:"Liberation Mono",monospace}
.ls{fill:#fff;font:bold 8px "Liberation Serif",serif}
.ls.s6{font-size:7px}
.preview{position:relative;flex:1;min-width:0;background:#000;overflow:hidden}
.preview svg{width:100%;height:100%}
.cz{fill:#fff;font-family:"Noto Sans CJK SC",sans-serif}
.thin{font-weight:300}
.cg{fill:#0f0;font-family:"DejaVu Sans Mono",monospace}
.cs{fill:#fff;font-family:"Liberation Serif",serif}
.inline{position:absolute;left:632px;top:251px;width:52px;height:19px;padding-left:3px;color:#fff;font:12px/16px "DejaVu Sans Mono",monospace;background:linear-gradient(#39f,#39f) no-repeat 3px 3px/30px 13px #fff}
.dialog>footer{display:flex;justify-content:flex-end;gap:6px;padding-top:6px}
.dialog footer .plainbtn{width:80px;height:26px}
.grab{position:absolute;right:3px;bottom:3px;width:8px;height:8px}

.status{display:flex;align-items:center;height:31px;background:#fafafa;flex:none}
.status span{white-space:nowrap}
.s1{width:92px;padding-left:2px}
.s2{width:140px}
.s3{width:110px}
.s4{width:110px}
.snaps{display:flex;align-items:center;gap:4px}
.snaps button{width:25px;height:25px;border:1px solid #999;border-radius:3px;display:flex;align-items:center;justify-content:center;gap:6px}
.snaps .wide{width:36px}
.snaps .on{background:#dbe8fb;border-color:#2a7fe4}
.snaps .dim{--k:#999;border-color:#bbb}
.snaps .bare{border:0;margin-left:6px}

.taskbar{display:flex;align-items:stretch;gap:4px;height:40px;padding-left:8px;border-top:1px solid #23405c;flex:none;background:linear-gradient(50deg,transparent 865px,#fff6 880px,transparent 900px),linear-gradient(90deg,#1b578b,#236699 60px,#4b9fd0 140px,#5fb2dc 390px,#3d9bd5 640px,#3590cf 840px,#2377bd 1100px,#1e69b0 1440px,#1a4275 1500px,#173b69);box-shadow:inset 0 1px #8fc4e4}
.orb{width:38px}
.grid{width:10px;margin:4px 9px 4px 3px;background:radial-gradient(circle,#123c60 1px,transparent 1px) 0 0/4px 4px}
.taskbar .grid{flex:none}
.app{width:58px;display:flex;align-items:center;justify-content:center;border:1px solid #1d4f75;border-radius:3px;background:linear-gradient(150deg,#cfe8f5aa,#7fbfe255 50%,#4593c455);box-shadow:inset 0 0 0 1px #ffffff88}
.app.on{background:linear-gradient(150deg,#ffffffdd,#c8e4f4cc)}
.yu{width:32px;height:32px;border-radius:4px;background:#3b8ef5;color:#fff;font-size:25px;line-height:30px}
.tray{margin-left:auto;display:flex;align-items:center;gap:4px}
.tray .grid{height:30px}
.t20{width:20px;height:20px}
.q{font:bold 12px "Liberation Sans",sans-serif;fill:#fff}
.clock{width:84px;color:#fff;display:flex;flex-direction:column;align-items:center;line-height:18px;margin-left:4px}
.next{margin:0 8px 0 6px}
.peek{align-self:stretch;width:14px;border:1px solid #0e2a4a;background:linear-gradient(90deg,#9fb6cf77,#2f5583)}
```
